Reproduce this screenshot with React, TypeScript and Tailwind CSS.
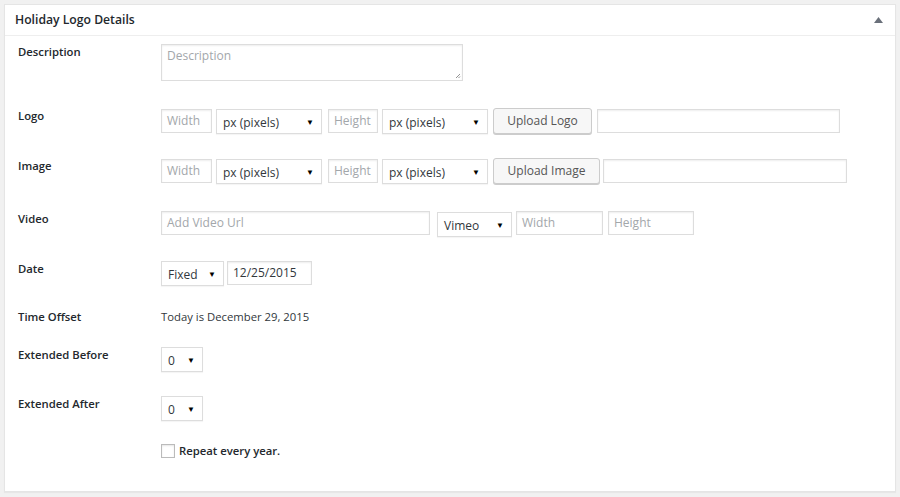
import React from "react";

function Field({ className, placeholder, value }: { className: string; placeholder?: string; value?: string }) {
    return (
        <div className={`h-[24px] border border-[#ddd] bg-white shadow-[inset_0_1px_2px_rgba(0,0,0,0.07)] px-[5px] flex items-center text-[12px] ${className}`}>
            {value ? <span className="text-[#32373c]">{value}</span> : <span className="text-[#a3a7ab]">{placeholder}</span>}
        </div>
    );
}

function Select({ className, value }: { className: string; value: string }) {
    return (
        <div className={`h-[25px] border border-[#ddd] bg-white shadow-[0_1px_1px_rgba(0,0,0,0.04)] pl-[6px] pr-[7px] flex items-center justify-between text-[12px] text-[#32373c] ${className}`}>
            <span className="mt-[2px]">{value}</span>
            <span className="text-[8px] text-black leading-none">▼</span>
        </div>
    );
}

function Button({ className, children }: { className: string; children: React.ReactNode }) {
    return (
        <div className={`h-[26px] border border-[#ccc] rounded-[3px] bg-[#f7f7f7] shadow-[0_1px_0_#ccc] flex items-center justify-center text-[12px] text-[#555] ${className}`}>
            {children}
        </div>
    );
}

function Row({ label, height, children }: { label: string; height: string; children: React.ReactNode }) {
    return (
        <div className={`flex items-start ${height}`}>
            <div className="w-[156px] pl-[13px] text-[11.3px] leading-[16px] font-semibold text-[#23282d] shrink-0">{label}</div>
            <div className="flex items-start">{children}</div>
        </div>
    );
}

export default function App() {
    return (
        <div className="w-[900px] h-[497px] bg-[#f1f1f1] pt-[4px] pl-[4px] pr-[4px] font-['Open_Sans',sans-serif]">
            <div className="w-[892px] h-[488px] bg-white border border-[#e5e5e5] shadow-[0_1px_1px_rgba(0,0,0,0.04)]">
                <div className="h-[31px] border-b border-[#eee] flex items-center justify-between pl-[10px] pr-[12px]">
                    <h2 className="text-[12.2px] font-semibold text-[#23282d]">Holiday Logo Details</h2>
                    <svg width="9" height="6" viewBox="0 0 9 6" className="mb-[1px]">
                        <path d="M4.5 0 L9 6 L0 6 Z" fill="#6a707a" />
                    </svg>
                </div>
                <div className="pt-[8px]">
                    <Row label="Description" height="h-[64px]">
                        <div className="w-[302px] h-[37px] border border-[#ddd] shadow-[inset_0_1px_2px_rgba(0,0,0,0.07)] px-[5px] pt-[2px] text-[12px] text-[#a3a7ab] relative">
                            Description
                            <svg width="6" height="6" viewBox="0 0 6 6" className="absolute right-[1px] bottom-[1px]">
                                <path d="M1 5 L5 1 M3.5 5 L5 3.5" stroke="#777" strokeWidth="0.8" />
                            </svg>
                        </div>
                    </Row>
                    <Row label="Logo" height="h-[50px]">
                        <Field className="w-[51px] mt-[1px]" placeholder="Width" />
                        <Select className="w-[106px] ml-[4px] mt-[1px]" value="px (pixels)" />
                        <Field className="w-[50px] ml-[6px] mt-[1px]" placeholder="Height" />
                        <Select className="w-[106px] ml-[4px] mt-[1px]" value="px (pixels)" />
                        <Button className="w-[99px] ml-[5px]">Upload Logo</Button>
                        <Field className="w-[243px] ml-[5px] mt-[1px]" />
                    </Row>
                    <Row label="Image" height="h-[53px]">
                        <Field className="w-[51px] mt-[1px]" placeholder="Width" />
                        <Select className="w-[106px] ml-[4px] mt-[1px]" value="px (pixels)" />
                        <Field className="w-[50px] ml-[6px] mt-[1px]" placeholder="Height" />
                        <Select className="w-[106px] ml-[4px] mt-[1px]" value="px (pixels)" />
                        <Button className="w-[107px] ml-[5px]">Upload Image</Button>
                        <Field className="w-[244px] ml-[3px] mt-[1px]" />
                    </Row>
                    <Row label="Video" height="h-[50px]">
                        <Field className="w-[269px]" placeholder="Add Video Url" />
                        <Select className="w-[75px] ml-[7px] mt-[1px]" value="Vimeo" />
                        <Field className="w-[87px] ml-[4px]" placeholder="Width" />
                        <Field className="w-[86px] ml-[5px]" placeholder="Height" />
                    </Row>
                    <Row label="Date" height="h-[48px]">
                        <Select className="w-[63px]" value="Fixed" />
                        <Field className="w-[85px] ml-[3px]" value="12/25/2015" />
                    </Row>
                    <Row label="Time Offset" height="h-[38px]">
                        <span className="text-[11.3px] leading-[16px] text-[#32373c]">Today is December 29, 2015</span>
                    </Row>
                    <Row label="Extended Before" height="h-[49px]">
                        <Select className="w-[42px] h-[24px]" value="0" />
                    </Row>
                    <Row label="Extended After" height="h-[47px]">
                        <Select className="w-[42px] h-[24px]" value="0" />
                    </Row>
                    <Row label="" height="h-[40px]">
                        <div className="flex items-center">
                            <div className="w-[14px] h-[14px] border border-[#bbb] bg-white shadow-[inset_0_1px_2px_rgba(0,0,0,0.1)]" />
                            <span className="ml-[4px] text-[11.3px] font-semibold text-[#23282d]">Repeat every year.</span>
                        </div>
                    </Row>
                </div>
            </div>
        </div>
    );
}
